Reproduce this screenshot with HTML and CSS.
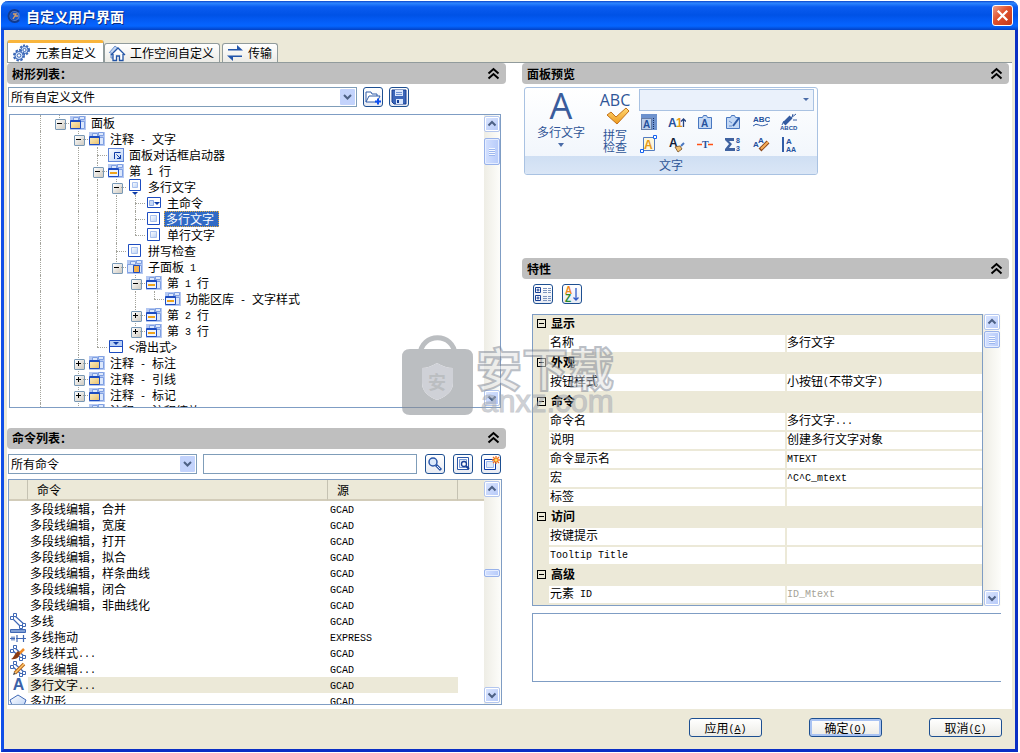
FILE: index.html
```html
<!DOCTYPE html>
<html lang="zh-CN">
<head>
<meta charset="utf-8">
<title>自定义用户界面</title>
<link rel="stylesheet" href="styles.css">
</head>
<body>
<svg class="defs" aria-hidden="true">
  <defs>
    <linearGradient id="tan" x1="0" y1="0" x2="1" y2="1"><stop offset="0" stop-color="#fdf0c4"/><stop offset="1" stop-color="#e8bf6c"/></linearGradient>
    <linearGradient id="pale" x1="0" y1="0" x2="1" y2="1"><stop offset="0" stop-color="#fff"/><stop offset="1" stop-color="#b9d0f4"/></linearGradient>
    <linearGradient id="gold" x1="0" y1="0" x2="0" y2="1"><stop offset="0" stop-color="#ffd873"/><stop offset="1" stop-color="#ee9a1e"/></linearGradient>
  </defs>
  <symbol id="base" viewBox="0 0 18 16">
    <path fill="#b4c8f2" d="M1 1h16v14H1z"/>
    <path fill="#dde8fb" stroke="#7f9fe2" d="M4.500 2.500h5v3h-5zM10.500 1.500h5v3h-5zM11.500 6.500h4v7h-4z"/>
  </symbol>
  <symbol id="panel" viewBox="0 0 18 16"><use href="#base"/><path fill="url(#tan)" stroke="#1d4cc0" d="M1.500 5.500h10v8h-10z"/><path stroke="#1d4cc0" d="M1 6.500h11"/></symbol>
  <symbol id="line" viewBox="0 0 18 16"><use href="#base"/><path fill="#edf3fd" stroke="#1d4cc0" d="M1.500 5.500h10v8h-10z"/><path stroke="#1d4cc0" d="M1 6.500h11"/><path fill="#f0a41c" d="M3 9h7v2H3z"/></symbol>
  <symbol id="sub" viewBox="0 0 18 16"><use href="#base"/><path fill="#dde8fb" stroke="#7f9fe2" d="M1.500 5.500h6v8h-6z"/><path fill="#f4b04a" stroke="#1d4cc0" d="M7.500 6.500h6v7h-6z"/></symbol>
  <symbol id="launch" viewBox="0 0 18 16"><rect x="1.500" y="1.500" width="15" height="13" fill="url(#pale)" stroke="#6287d8"/><path fill="none" stroke="#0d3aa5" d="M7.500 12V5.500h6M9.500 7.500l4 4M13.500 8v3.500H10"/></symbol>
  <symbol id="btn" viewBox="0 0 18 16"><path fill="#fff" stroke="#1d4cc0" d="M2.500 1.500h12v12h-12z"/><path fill="url(#pale)" stroke="#a9c1ee" d="M5.500 4.500h6v6h-6z"/></symbol>
  <symbol id="split" viewBox="0 0 18 16"><path fill="#fff" stroke="#1d4cc0" d="M3.500.500h11v11h-11z"/><path fill="url(#pale)" stroke="#a9c1ee" d="M6.500 3.500h5v5h-5z"/><path fill="#0d3aa5" d="M6 13h6l-3 3z"/></symbol>
  <symbol id="main" viewBox="0 0 18 16"><path fill="#fff" stroke="#1d4cc0" d="M2.500 2.500h13v10h-13z"/><path fill="#c7d9f7" stroke="#8daae6" d="M4.500 5.500h4v5h-4z"/><path fill="#0d3aa5" d="M9 7h6l-3 3z"/></symbol>
  <symbol id="slide" viewBox="0 0 18 16"><path fill="#fff" stroke="#1d4cc0" d="M2.500 1.500h13v12h-13z"/><path fill="#b9cff5" d="M3 2h12v5H3z"/><path stroke="#1d4cc0" d="M3 7.500h12"/><path fill="#0d3aa5" d="M6 3h6L9 6z"/></symbol>
  <symbol id="up" viewBox="0 0 14 14"><path fill="none" stroke="#fff" d="M.5.500h13v13H.5z"/><path fill="none" stroke="#4d6185" stroke-width="2" d="M3.500 8.500L7 5l3.500 3.500"/></symbol>
  <symbol id="down" viewBox="0 0 14 14"><path fill="none" stroke="#fff" d="M.5.500h13v13H.5z"/><path fill="none" stroke="#4d6185" stroke-width="2" d="M3.500 5.500L7 9l3.500-3.500"/></symbol>
  <symbol id="fold" viewBox="0 0 14 14"><path fill="none" stroke="#000" stroke-width="2" d="M1.500 6.500l5-4.500 5 4.500M1.500 11.500l5-4.500 5 4.500"/></symbol>
  <symbol id="mline" viewBox="0 0 18 16"><path fill="none" stroke="#3f68b5" stroke-width="1.200" d="M3 5l9 9M6 3l10 9"/><path fill="#fff" stroke="#3f68b5" d="M1.500 3.500h3v3h-3zM4.500.500h3v3h-3zM13.500 10.500h3v3h-3zM10.500 12.500h3v3h-3z"/></symbol>
  <symbol id="mclip" viewBox="0 0 18 16"><path fill="none" stroke="#3f68b5" stroke-width="1.200" d="M3 5l10 9M6 3l10 9"/><path fill="#fff" stroke="#3f68b5" d="M1.500 4.500h3v3h-3zM4.500.500h3v3h-3zM13.500 10.500h3v3h-3zM10.500 12.500h3v3h-3z"/></symbol>
</svg>

<main class="window">
  <header class="titlebar">
    <svg class="logo" viewBox="0 0 14 14"><circle cx="7" cy="7" r="5" fill="#1c56c4" stroke="#5d7fc4" stroke-width="1.500"/><path fill="none" stroke="#123a8e" stroke-width="2" d="M12 3A6 6 0 1 0 12 11"/><path fill="none" stroke="#d9a066" stroke-width="1.300" d="M6 10l3-5H6M9 5l-1 2h3"/></svg>
    <h1>自定义用户界面</h1>
    <button class="close" aria-label="关闭"><svg viewBox="0 0 20 20"><path stroke="#fff" stroke-width="2.400" d="M5 5l10 10M15 5L5 15"/></svg></button>
  </header>

  <nav class="tabs">
    <button class="tab active"><svg viewBox="0 0 18 18"><g fill="#dce9fb" stroke="#3b68b8"><circle cx="11.500" cy="6" r="4.500" stroke-width="2" stroke-dasharray="2 1.200"/><circle cx="11.500" cy="6" r="3.600"/><circle cx="11.500" cy="6" r="1.600" fill="#fff"/><circle cx="6" cy="11.500" r="5" stroke-width="2" stroke-dasharray="2.400 1.500"/><circle cx="6" cy="11.500" r="4"/><circle cx="6" cy="11.500" r="1.800" fill="#fff"/></g></svg>元素自定义</button>
    <button class="tab"><svg viewBox="0 0 18 18"><path fill="#c4d7f3" stroke="#6c91cd" d="M1 9l6-7 6 5M3 8v6h3"/><path fill="#fff" stroke="#2254a6" stroke-width="1.300" d="M3 11l7-7 7 7M5 10v6.500h3.500V12h3v4.500H15V10"/></svg>工作空间自定义</button>
    <button class="tab gap"><svg viewBox="0 0 18 18"><path fill="#2355aa" d="M2 5h9V1l6 5.500H2zM16 13H7v4l-6-5.500h15z"/></svg>传输</button>
  </nav>

  <div class="page">
    <div class="column left">
      <h2 class="bar"><span>树形列表<span class="colon">：</span></span><svg><use href="#fold"/></svg></h2>
      <div class="tools first">
        <select class="combo wide" aria-label="自定义文件"><option>所有自定义文件</option></select>
        <button class="tool" aria-label="加载"><svg viewBox="0 0 18 16"><path fill="#fff" stroke="#315da8" d="M2 13V3h5l1 2h5v2M2 13l3-6h11l-3 6z"/><path stroke="#0d4ff0" stroke-width="2" d="M11 12.500h6M14 9.500v6"/></svg></button>
        <button class="tool" aria-label="保存"><svg viewBox="0 0 18 16"><path fill="#3c66b8" stroke="#173f94" d="M2 1h14v14H4l-2-2z"/><path fill="#d9e6fb" d="M5 1h8v6H5zM6 10h7v5H6z"/><path stroke="#6f92d2" d="M6 3.500h6M6 5.500h6"/><path fill="#173f94" d="M7 11h2v3H7z"/></svg></button>
      </div>
      <div class="box treebox">
        <div class="tree" role="tree">
          <div class="node"><i class="v"></i><i class="l minus"></i><svg><use href="#panel"/></svg><span>面板</span></div>
          <div class="node"><i class="v"></i><i></i><i class="t minus"></i><svg><use href="#panel"/></svg><span>注释<b> - </b>文字</span></div>
          <div class="node"><i class="v"></i><i></i><i class="v"></i><i class="t"></i><svg><use href="#launch"/></svg><span>面板对话框启动器</span></div>
          <div class="node"><i class="v"></i><i></i><i class="v"></i><i class="t minus"></i><svg><use href="#line"/></svg><span>第<b> 1 </b>行</span></div>
          <div class="node"><i class="v"></i><i></i><i class="v"></i><i class="v"></i><i class="t minus"></i><svg><use href="#split"/></svg><span>多行文字</span></div>
          <div class="node"><i class="v"></i><i></i><i class="v"></i><i class="v"></i><i class="v"></i><i class="t"></i><svg><use href="#main"/></svg><span>主命令</span></div>
          <div class="node"><i class="v"></i><i></i><i class="v"></i><i class="v"></i><i class="v"></i><i class="t"></i><svg><use href="#btn"/></svg><span class="picked">多行文字</span></div>
          <div class="node"><i class="v"></i><i></i><i class="v"></i><i class="v"></i><i class="v"></i><i class="l"></i><svg><use href="#btn"/></svg><span>单行文字</span></div>
          <div class="node"><i class="v"></i><i></i><i class="v"></i><i class="v"></i><i class="t"></i><svg><use href="#btn"/></svg><span>拼写检查</span></div>
          <div class="node"><i class="v"></i><i></i><i class="v"></i><i class="v"></i><i class="l minus"></i><svg><use href="#sub"/></svg><span>子面板<b> 1</b></span></div>
          <div class="node"><i class="v"></i><i></i><i class="v"></i><i class="v"></i><i></i><i class="t minus"></i><svg><use href="#line"/></svg><span>第<b> 1 </b>行</span></div>
          <div class="node"><i class="v"></i><i></i><i class="v"></i><i class="v"></i><i></i><i class="v"></i><i class="l"></i><svg><use href="#line"/></svg><span>功能区库<b> - </b>文字样式</span></div>
          <div class="node"><i class="v"></i><i></i><i class="v"></i><i class="v"></i><i></i><i class="t plus"></i><svg><use href="#line"/></svg><span>第<b> 2 </b>行</span></div>
          <div class="node"><i class="v"></i><i></i><i class="v"></i><i class="v"></i><i></i><i class="l plus"></i><svg><use href="#line"/></svg><span>第<b> 3 </b>行</span></div>
          <div class="node"><i class="v"></i><i></i><i class="v"></i><i class="l"></i><svg><use href="#slide"/></svg><span><b>&lt;</b>滑出式<b>&gt;</b></span></div>
          <div class="node"><i class="v"></i><i></i><i class="t plus"></i><svg><use href="#panel"/></svg><span>注释<b> - </b>标注</span></div>
          <div class="node"><i class="v"></i><i></i><i class="t plus"></i><svg><use href="#panel"/></svg><span>注释<b> - </b>引线</span></div>
          <div class="node"><i class="v"></i><i></i><i class="t plus"></i><svg><use href="#panel"/></svg><span>注释<b> - </b>标记</span></div>
          <div class="node"><i class="v"></i><i></i><i class="t plus"></i><svg><use href="#panel"/></svg><span>注释<b> - </b>注释缩放</span></div>
        </div>
        <div class="scroll"><svg class="arrow"><use href="#up"/></svg><div class="before"></div><div class="thumb grip"></div><div class="after"></div><svg class="arrow"><use href="#down"/></svg></div>
      </div>

      <h2 class="bar"><span>命令列表<span class="colon">：</span></span><svg><use href="#fold"/></svg></h2>
      <div class="tools second">
        <select class="combo half" aria-label="命令类别"><option>所有命令</option></select>
        <input class="search" type="text" aria-label="搜索命令">
        <button class="tool" aria-label="查找"><svg viewBox="0 0 18 16"><circle cx="7" cy="6" r="4" fill="#dceafc" stroke="#2a56a8" stroke-width="1.500"/><path stroke="#2a56a8" stroke-width="3" d="M10 9l5 5"/><path stroke="#e3ecfa" d="M11 10l3 3"/></svg></button>
        <button class="tool" aria-label="查找替换"><svg viewBox="0 0 18 16"><path fill="#fff" stroke="#2a56a8" d="M3.500 1.500h11v12h-11z"/><path fill="#e3ecfa" stroke="#7a9bd6" d="M5.500 3.500h7v8h-7z"/><circle cx="10" cy="8" r="2.500" fill="#fff" stroke="#173f94" stroke-width="1.300"/><path stroke="#173f94" stroke-width="2" d="M12 10l3 3"/></svg></button>
        <button class="tool" aria-label="新建命令"><svg viewBox="0 0 18 16"><path fill="#fff" stroke="#0d3aa5" d="M2.500 3.500h11v10h-11z"/><path fill="#dfe9fa" stroke="#9cb8ec" d="M4.500 5.500h7v6h-7z"/><path stroke="#f2701c" stroke-width="1.300" d="M14 0v8M10 4h8M11 1l6 6M17 1l-6 6"/><circle cx="14" cy="4" r="1.500" fill="#ffe25c"/></svg></button>
      </div>
      <div class="box listbox">
        <table class="commands">
          <colgroup><col class="c-icon"><col class="c-name"><col class="c-source"><col></colgroup>
          <thead><tr><th></th><th>命令</th><th>源</th><th></th></tr></thead>
          <tbody>
            <tr><td></td><td>多段线编辑，合并</td><td><b>GCAD</b></td><td></td></tr>
            <tr><td></td><td>多段线编辑，宽度</td><td><b>GCAD</b></td><td></td></tr>
            <tr><td></td><td>多段线编辑，打开</td><td><b>GCAD</b></td><td></td></tr>
            <tr><td></td><td>多段线编辑，拟合</td><td><b>GCAD</b></td><td></td></tr>
            <tr><td></td><td>多段线编辑，样条曲线</td><td><b>GCAD</b></td><td></td></tr>
            <tr><td></td><td>多段线编辑，闭合</td><td><b>GCAD</b></td><td></td></tr>
            <tr><td></td><td>多段线编辑，非曲线化</td><td><b>GCAD</b></td><td></td></tr>
            <tr><td><svg><use href="#mline"/></svg></td><td>多线</td><td><b>GCAD</b></td><td></td></tr>
            <tr><td><svg viewBox="0 0 18 16"><path fill="#7f9fd6" stroke="#3f68b5" d="M1.500.500h15v3h-15z"/><path fill="none" stroke="#3f68b5" stroke-width="1.200" d="M1 9.500h5M3 7.500v4M5 7.500v4M8 6v7M14.500 6v7M7 9.500h10"/></svg></td><td>多线拖动</td><td><b>EXPRESS</b></td><td></td></tr>
            <tr><td><svg viewBox="0 0 18 16"><use href="#mclip"/><path stroke="#ef8a25" stroke-width="2.500" d="M15 4l-5 5"/><path fill="#8b3b12" d="M11 8c0 4-4 7-9 6 3-1 3-5 7-8z"/></svg></td><td>多线样式<b>...</b></td><td><b>GCAD</b></td><td></td></tr>
            <tr><td><svg viewBox="0 0 18 16"><use href="#mclip"/><path stroke="#b9661b" stroke-width="3.500" d="M15 3L6 12"/><path stroke="#ffc86a" stroke-width="1.500" d="M15 3L6 12"/><path fill="#444" d="M4 14l1-3 2 2z"/></svg></td><td>多线编辑<b>...</b></td><td><b>GCAD</b></td><td></td></tr>
            <tr class="current"><td><span class="glyph">A</span></td><td>多行文字<b>...</b></td><td><b>GCAD</b></td><td></td></tr>
            <tr><td><svg viewBox="0 0 18 16"><path fill="url(#pale)" stroke="#3f68b5" d="M9 2l8 5-3 8H4L1 7z"/></svg></td><td>多边形</td><td><b>GCAD</b></td><td></td></tr>
          </tbody>
        </table>
        <div class="scroll"><svg class="arrow"><use href="#up"/></svg><div class="middle"></div><div class="thumb small"></div><div class="remain"></div><svg class="arrow"><use href="#down"/></svg></div>
      </div>
    </div>

    <div class="column right">
      <h2 class="bar">面板预览<svg><use href="#fold"/></svg></h2>
      <div class="preview">
        <section class="ribbon">
          <div class="groups">
            <button class="big"><span class="letter">A</span>多行文字<svg class="caret" viewBox="0 0 6 4"><path fill="#4a6ca8" d="M0 0h6L3 4z"/></svg></button>
            <button class="big spell"><span class="abc">ABC</span><svg class="tick" viewBox="0 0 24 18"><path fill="url(#gold)" stroke="#c2711b" d="M1 8l4-3 5 5L20 1l3 3L11 17z"/></svg>拼写<br>检查</button>
            <div class="stack">
              <select class="style" aria-label="文字样式"><option></option></select>
              <div class="icons">
                <svg viewBox="0 0 18 18"><path fill="#6d92cd" d="M1 1h16v16H1z"/><path fill="#b9cdea" d="M1 5h11v12H1z"/><path stroke="#172e62" stroke-dasharray="1 1" fill="none" d="M1.500 5.500h10v11h-10zM13.500 5v12"/><text x="3" y="15" class="t10">A</text></svg>
                <svg viewBox="0 0 18 18"><text x="0" y="14" class="t12">A</text><text x="8" y="14" class="t12 amber">1</text><path fill="none" stroke="#24427f" stroke-width="1.300" d="M15.500 14V6M13 8.500L15.500 6 18 8.500"/></svg>
                <svg viewBox="0 0 18 18"><path fill="#c3d8f5" stroke="#4877c0" d="M2.500 4.500h4l1-2h3l1 2h4v11h-13z"/><text x="5" y="14" class="t10">A</text></svg>
                <svg viewBox="0 0 18 18"><path fill="#c3d8f5" stroke="#4877c0" d="M2.500 4.500h4l1-2h3l1 2h4v11h-13z"/><path stroke="#315da8" stroke-width="2" d="M15 5l-6 8"/><path fill="none" stroke="#6b92d0" d="M5 8l3 2M5 13h3"/></svg>
                <svg viewBox="0 0 18 18"><text x="1" y="9" class="t8">ABC</text><path fill="none" stroke="#315da8" d="M1 13q3-3 6-1t9-1"/></svg>
                <svg viewBox="0 0 18 18"><path stroke="#345ba0" stroke-width="4" d="M4 11l7-7"/><path stroke="#345ba0" d="M11 5l5-4M13 7h4M2 12l2-4M12 4l1-3"/><text x="0" y="17" class="t6">ABCD</text></svg>
              </div>
              <div class="icons">
                <svg viewBox="0 0 18 18"><path fill="#fff7d9" stroke="#527bc0" d="M3.500 2.500h11v13h-11z"/><text x="4" y="14" class="t12 amber">A</text><path fill="#fff" stroke="#1463f2" d="M13.500.500h3v3h-3zM.5 14.500h3v3h-3z"/></svg>
                <svg viewBox="0 0 18 18"><text x="1" y="12" class="t12 dark">A</text><path stroke="#4877c0" stroke-width="2" d="M16 8l-3 3"/><path fill="#f2c072" stroke="#8c683b" d="M7 12l5-1 2 3-4 3z"/></svg>
                <svg viewBox="0 0 18 18"><path stroke="#ff5014" stroke-width="1.500" d="M1 9.500h5M12 9.500h5"/><text x="6" y="13" class="serif">T</text></svg>
                <svg viewBox="0 0 18 18"><path fill="#3f62a0" d="M1 3h9v3H5l3 3-3 4h6v3H1v-2l4-5-4-4z"/><text x="12" y="8" class="t7">8</text><text x="12" y="16" class="t7">3</text></svg>
                <svg viewBox="0 0 18 18"><text x="1" y="12" class="t8">A</text><text x="6" y="8" class="t8">A</text><path stroke="#8c481b" stroke-width="4" d="M16 7l-8 8"/><path stroke="#f6ae59" stroke-width="2" d="M16 7l-7 7"/></svg>
                <svg viewBox="0 0 18 18"><path fill="#315da8" d="M2 2h2v15H2z"/><text x="6" y="9" class="t8">A</text><text x="6" y="17" class="t7">AA</text></svg>
              </div>
            </div>
          </div>
          <footer>文字</footer>
        </section>
      </div>

      <h2 class="bar">特性<svg><use href="#fold"/></svg></h2>
      <div class="properties">
        <div class="sorts">
          <button class="tool" aria-label="按分类"><svg viewBox="0 0 18 16"><path fill="#fff" stroke="#173f94" d="M1.500 1.500h5v5h-5zM1.500 9.500h5v5h-5z"/><path stroke="#173f94" d="M2.500 4h3M4 2.500v3M2.500 12h3M4 10.500v3"/><path stroke="#7d94bd" stroke-dasharray="4 1" d="M9 2.500h8M9 4.500h8M9 6.500h8M9 10.500h8M9 12.500h8M9 14.500h8"/></svg></button>
          <button class="tool" aria-label="按字母"><svg viewBox="0 0 18 16"><text x="2" y="8" class="t10 orange">A</text><text x="2" y="16" class="t10 green">Z</text><path fill="none" stroke="#315bc8" stroke-width="1.300" d="M13 2v12M10.500 11.500L13 14l2.500-2.500"/></svg></button>
        </div>
        <div class="sheet">
          <div class="box gridbox">
            <table class="grid">
              <colgroup><col class="g-edge"><col class="g-name"><col></colgroup>
              <tbody>
                <tr class="cat"><th colspan="3"><span class="sign"></span>显示</th></tr>
                <tr><td></td><td>名称</td><td>多行文字</td></tr>
                <tr class="cat"><th colspan="3"><span class="sign"></span>外观</th></tr>
                <tr><td></td><td>按钮样式</td><td>小按钮<b>(</b>不带文字<b>)</b></td></tr>
                <tr class="cat"><th colspan="3"><span class="sign"></span>命令</th></tr>
                <tr><td></td><td>命令名</td><td>多行文字<b>...</b></td></tr>
                <tr><td></td><td>说明</td><td>创建多行文字对象</td></tr>
                <tr><td></td><td>命令显示名</td><td><b>MTEXT</b></td></tr>
                <tr><td></td><td>宏</td><td><b>^C^C_mtext</b></td></tr>
                <tr><td></td><td>标签</td><td></td></tr>
                <tr class="cat"><th colspan="3"><span class="sign"></span>访问</th></tr>
                <tr><td></td><td>按键提示</td><td></td></tr>
                <tr><td></td><td><b>Tooltip Title</b></td><td></td></tr>
                <tr class="cat"><th colspan="3"><span class="sign"></span>高级</th></tr>
                <tr><td></td><td>元素<b> ID</b></td><td class="muted"><b>ID_Mtext</b></td></tr>
              </tbody>
            </table>
          </div>
          <div class="scroll"><svg class="arrow"><use href="#up"/></svg><div class="thumb grip short"></div><div class="after"></div><svg class="arrow"><use href="#down"/></svg></div>
        </div>
        <div class="description"></div>
      </div>
    </div>
  </div>

  <footer class="actions">
    <button class="action">应用<b>(<u>A</u>)</b></button>
    <button class="action default">确定<b>(<u>O</u>)</b></button>
    <button class="action">取消<b>(<u>C</u>)</b></button>
  </footer>

  <div class="watermark" aria-hidden="true">
    <svg viewBox="0 0 71 80"><path fill="none" stroke="#85898f" stroke-width="5" d="M18 20C19-3 52-3 53 20"/><path fill="#85898f" fill-rule="evenodd" d="M8 14h55q8 0 8 8v50q0 8-8 8H8q-8 0-8-8V22q0-8 8-8zM35 28q-8 5-15 5v15q0 11 15 17 16-6 16-17V33q-8 0-16-5z"/><path fill="#a9adb8" d="M35 28q-8 5-15 5v15q0 11 15 17 16-6 16-17V33q-8 0-16-5z"/><text x="26" y="54" class="seal">安</text></svg>
    <div class="brand"><span class="brand-cn">安下载</span><span class="brand-url">anxz.com</span></div>
  </div>
</main>
</body>
</html>
```
FILE: styles.css
```css
* { box-sizing: border-box; }

body {
  margin: 0;
  background: #fff;
  color: #000;
  font: 12px/16px "Noto Sans CJK SC", sans-serif;
}

button, select, input {
  margin: 0;
  padding: 0;
  color: inherit;
  font: inherit;
}

b {
  font: 10px/1px "Liberation Mono", monospace;
  vertical-align: 1px;
  white-space: pre;
}

svg { display: block; flex: none; }
.defs { position: absolute; width: 0; height: 0; }

.window {
  position: relative;
  display: flex;
  flex-direction: column;
  height: calc(100vh - 2px);
  min-height: 640px;
  margin: 1px 2px 0 1px;
  border: solid #0831d9;
  border-color: #0f4fe8 #0a2fc4 #0a2fc4 #0f4fe8;
  border-width: 0 3px 3px;
  border-radius: 7px 7px 0 0;
  background: #ece9d8;
}

/* title bar */
.titlebar {
  display: flex;
  align-items: center;
  flex: none;
  height: 29px;
  margin: 0 -3px;
  padding: 0 5px 0 6px;
  border-radius: 7px 7px 0 0;
  background: linear-gradient(#0b45c8 0, #2e86ff 2px, #0a5cf0 6px, #0052e6 14px, #0560fb 22px, #0565ff 25px, #0341c4 29px);
}
.logo { width: 14px; height: 14px; }
.titlebar h1 {
  flex: 1;
  margin: 0 0 0 5px;
  color: #fff;
  font-size: 14px;
  line-height: 20px;
  text-shadow: 1px 1px #0c2f86;
}
.close {
  width: 21px;
  height: 21px;
  border: 1px solid #fff;
  border-radius: 3px;
  background: linear-gradient(135deg, #f0a088, #e0502c 45%, #c2381a);
}
.close svg { width: 19px; height: 19px; }

/* tabs */
.tabs {
  display: flex;
  align-items: flex-end;
  flex: none;
  height: 32px;
  padding-left: 3px;
}
.tab {
  display: flex;
  align-items: center;
  gap: 4px;
  height: 19px;
  padding: 0 5px 0 3px;
  border: 1px solid #919b9c;
  border-bottom: 0;
  border-radius: 3px 3px 0 0;
  background: linear-gradient(#fff, #ecebe6);
  line-height: 14px;
}
.tab svg { width: 18px; height: 18px; }
.tab.active {
  gap: 5px;
  height: 22px;
  padding: 0 7px 0 5px;
  border-top: 3px solid #f9b53c;
  background: #fff;
}
.tab.gap { margin-left: 2px; }

/* page */
.page {
  display: grid;
  grid-template-columns: 499fr 487fr;
  gap: 16px;
  flex: 1;
  min-height: 0;
  margin: 0 3px;
  padding-right: 3px;
  border-top: 1px solid #919b9c;
  background: #fff;
}
.column {
  display: flex;
  flex-direction: column;
  min-width: 0;
  min-height: 0;
}
.bar {
  display: flex;
  align-items: center;
  justify-content: space-between;
  flex: none;
  height: 21px;
  margin: 0;
  padding: 0 5px;
  border-radius: 4px;
  background: #bfbfbf;
  font-size: 12px;
  line-height: 20px;
}
.bar svg { width: 14px; height: 14px; }
.colon { font-family: "Noto Sans CJK TC", sans-serif; }

.tools {
  display: flex;
  align-items: center;
  gap: 6px;
  flex: none;
  height: 20px;
}
.tools.first { margin: 3px 97px 7px 1px; }
.tools.second { margin: 5px 5px 5px 1px; }

.combo {
  flex: 1;
  min-width: 0;
  height: 20px;
  padding-left: 2px;
  border: 1px solid #7f9db9;
  border-radius: 0;
  appearance: none;
  background: #fff url("data:image/svg+xml,%3Csvg xmlns='http://www.w3.org/2000/svg' width='15' height='16'%3E%3Crect width='15' height='16' rx='1' fill='%23c3d3fc'/%3E%3Cpath d='M4 6l3.500 3.500L11 6' fill='none' stroke='%234d6185' stroke-width='2'/%3E%3C/svg%3E") no-repeat right 1px center;
}
.combo.half { flex: 188 1 0; }
.search {
  flex: 215 1 0;
  min-width: 0;
  height: 20px;
  border: 1px solid #7f9db9;
}
.tool {
  flex: none;
  width: 20px;
  height: 20px;
  border: 1px solid #1d4f91;
  border-radius: 3px;
  background: linear-gradient(#fff, #e8ebf3);
}
.tool svg { width: 18px; height: 16px; }
.second .tool { margin-left: 2px; }

.box {
  display: flex;
  overflow: hidden;
  min-height: 0;
  border: 1px solid #7f9dc4;
  background: #fff;
}
.treebox { flex: 294 1 0; margin: 0 5px 20px 2px; }
.listbox { flex: 226 1 0; margin: 0 4px 4px 1px; }

/* tree */
.tree {
  flex: 1;
  min-width: 0;
  padding-left: 21px;
}
.node {
  display: flex;
  height: 16px;
  white-space: nowrap;
}
.node svg { width: 18px; height: 16px; }
.node span { margin-left: 2px; padding: 0 2px; line-height: 15px; }
.node .picked {
  margin-left: 1px;
  padding-right: 5px;
  outline: 1px dotted #e0a63c;
  outline-offset: -1px;
  background: #316ac5;
  color: #fff;
}
.node i {
  position: relative;
  flex: none;
  width: 19px;
}
.v::before, .t::before, .l::before {
  content: "";
  position: absolute;
  top: 0;
  bottom: 0;
  left: 9px;
  border-left: 1px dotted #a4a49c;
}
.l::before { bottom: 8px; }
.t::after, .l::after {
  content: "";
  position: absolute;
  top: 8px;
  right: 0;
  left: 9px;
  border-top: 1px dotted #a4a49c;
}
.minus::after, .plus::after { left: 14px; }
.minus::before, .plus::before {
  top: 4px;
  bottom: auto;
  left: 5px;
  width: 9px;
  height: 9px;
  border: 1px solid #7898b5;
  border-radius: 1px;
  background:
    linear-gradient(#000, #000) 1px 3px / 5px 1px no-repeat,
    linear-gradient(135deg, #fff, #cfcac0);
}
.plus::before {
  background:
    linear-gradient(#000, #000) 1px 3px / 5px 1px no-repeat,
    linear-gradient(#000, #000) 3px 1px / 1px 5px no-repeat,
    linear-gradient(135deg, #fff, #cfcac0);
}
.t.minus, .t.plus {
  background: repeating-linear-gradient(#a4a49c 0 1px, #fff 1px 2px) 9px 0 / 1px 16px no-repeat;
}
.l.minus, .l.plus {
  background: repeating-linear-gradient(#a4a49c 0 1px, #fff 1px 2px) 9px 0 / 1px 4px no-repeat;
}

/* scroll bars */
.scroll {
  display: flex;
  flex-direction: column;
  flex: none;
  width: 16px;
  padding: 1px 0;
  background: linear-gradient(90deg, #eeede5, #fdfdfa);
}
.arrow {
  width: 16px;
  height: 16px;
  border: 1px solid #b3c6ee;
  border-radius: 2px;
  background: linear-gradient(135deg, #dbe6ff, #b6c9f8);
}
.thumb {
  height: 27px;
  border: 1px solid #98b2ea;
  border-radius: 2px;
  background: linear-gradient(90deg, #d3e0ff, #b7cbfa);
  box-shadow: inset 0 0 0 1px #e6eeff;
}
.grip {
  background:
    repeating-linear-gradient(#f4f8ff 0 1px, #9db7ee 1px 2px) center / 6px 8px no-repeat,
    linear-gradient(90deg, #d3e0ff, #b7cbfa);
}
.short { height: 17px; margin-top: 1px; }
.small { height: 8px; }
.before { height: 6px; }
.after { flex: 1; }
.middle { flex: 72 1 0; }
.remain { flex: 110 1 0; }
.listbox .scroll { padding-right: 1px; width: 17px; }

/* command list */
.commands {
  flex: 1;
  width: 100%;
  min-width: 0;
  align-self: flex-start;
  table-layout: fixed;
  border-spacing: 0;
}
.c-icon { width: 19px; }
.c-name { width: 300px; }
.c-source { width: 130px; }
.commands th {
  height: 21px;
  padding: 0 9px;
  border-right: 1px solid #c5c2b2;
  border-bottom: 2px solid #d2ccb9;
  background: #ece9d8;
  font-weight: 400;
  line-height: 19px;
  text-align: left;
}
.commands th:first-child, .commands th:last-child { padding: 0; }
.commands th:last-child { border-right: 0; }
.commands td {
  height: 16px;
  padding: 0 2px;
  line-height: 15px;
  vertical-align: top;
  white-space: nowrap;
}
.commands td:first-child, .commands td:last-child { padding: 0; }
.commands svg { width: 18px; height: 16px; }
.current td:nth-child(2), .current td:nth-child(3) { background: #ece9d8; }
.glyph {
  display: block;
  color: #3c62a8;
  font: 700 16px/16px "Liberation Sans", sans-serif;
  text-align: center;
}

/* ribbon preview */
.preview {
  flex: none;
  height: 174px;
  padding: 3px 2px;
}
.ribbon {
  width: 294px;
  overflow: hidden;
  border: 1px solid #a9c2e2;
  border-radius: 3px;
  background: linear-gradient(#fff, #eef4fb);
  color: #2f5597;
}
.groups { display: flex; height: 68px; }
.big {
  display: flex;
  flex-direction: column;
  align-items: center;
  width: 72px;
  border: 0;
  background: none;
  line-height: 12px;
}
.letter {
  margin-bottom: 2px;
  color: #3a5c9c;
  font: 36px/36px "Open Sans", sans-serif;
}
.caret { width: 6px; height: 4px; margin-top: 5px; }
.spell { display: block; width: 36px; text-align: center; }
.abc {
  display: block;
  font: 16px/16px "Open Sans", sans-serif;
}
.tick { width: 24px; height: 18px; margin: -1px 0 4px 9px; }
.stack { flex: 1; padding: 1px 3px 0 6px; }
.style {
  display: block;
  width: 100%;
  height: 22px;
  border: 1px solid #a9c2e2;
  appearance: none;
  background: #eaf1fb url("data:image/svg+xml,%3Csvg xmlns='http://www.w3.org/2000/svg' width='6' height='4'%3E%3Cpath d='M0 0h6L3 3z' fill='%234a6ca8'/%3E%3C/svg%3E") no-repeat right 4px center;
}
.icons {
  display: flex;
  gap: 10px;
  padding: 2px 0 2px 1px;
}
.icons svg { width: 18px; height: 18px; }
.ribbon footer {
  height: 18px;
  background: linear-gradient(#cfdff3, #dae6f6);
  line-height: 17px;
  text-align: center;
}
text { font-family: "Liberation Sans", sans-serif; font-weight: 700; fill: #24509c; }
.t6 { font-size: 6px; }
.t7 { font-size: 7px; }
.t8 { font-size: 8px; }
.t10 { font-size: 10px; }
.t12 { font-size: 12px; }
.amber { fill: #e59a17; }
.orange { fill: #f08a1d; }
.green { fill: #2c8a2c; }
.dark { fill: #111c38; }
.serif { font: 700 10px "Liberation Serif", serif; }

/* properties */
.properties {
  display: flex;
  flex-direction: column;
  flex: 1;
  min-height: 0;
  padding: 5px 8px 27px 10px;
}
.sorts { display: flex; gap: 9px; margin: 0 0 10px 1px; }
.sheet { display: flex; flex: 1; min-height: 0; }
.gridbox { flex: 1; min-width: 0; background: #ece9d8; }
.sheet .scroll { width: 18px; padding: 0 1px; }
.grid {
  width: 100%;
  align-self: flex-start;
  table-layout: fixed;
  border-spacing: 0;
}
.g-edge { width: 16px; }
.g-name { width: 236px; }
.grid td {
  height: 19px;
  padding: 0 0 0 1px;
  border-bottom: 2px solid #ece9d8;
  background: #fff;
  line-height: 14px;
  vertical-align: top;
  white-space: nowrap;
}
.grid td:first-child { background: #ece9d8; }
.grid td:last-child { padding: 0; border-left: 2px solid #ece9d8; }
.grid th {
  height: 20px;
  padding: 0 0 0 4px;
  line-height: 16px;
  text-align: left;
  vertical-align: top;
}
.sign {
  display: inline-block;
  width: 9px;
  height: 9px;
  margin-right: 5px;
  border: 1px solid #000;
  background: linear-gradient(#000, #000) center / 5px 1px no-repeat;
}
.grid .muted { color: #a5a397; }
.description {
  flex: none;
  height: 69px;
  margin-top: 7px;
  border: 1px solid #7f9dc4;
  border-right: 0;
}

/* dialog buttons */
.actions {
  display: flex;
  justify-content: flex-end;
  align-items: flex-start;
  gap: 47px;
  flex: none;
  height: 40px;
  padding: 9px 13px 0;
}
.action {
  width: 73px;
  height: 19px;
  border: 1px solid #1d4f91;
  border-radius: 3px;
  background: linear-gradient(#fff, #ecebe5);
  line-height: 16px;
}
.default { box-shadow: inset 0 0 0 2px #a9c3f2; }

/* watermark */
.watermark {
  position: absolute;
  top: 334px;
  left: 398px;
  display: flex;
  gap: 3px;
  opacity: 0.55;
  pointer-events: none;
}
.watermark svg { width: 71px; height: 80px; }
.seal { font: 700 18px "Noto Sans CJK SC", sans-serif; fill: #85898f; }
.brand { display: flex; flex-direction: column; padding-top: 11px; }
.brand-cn {
  color: #e4e5e4;
  font-size: 46px;
  font-weight: 700;
  line-height: 40px;
  -webkit-text-stroke: 2px #858c99;
}
.brand-url {
  padding-left: 5px;
  color: #a9adb5;
  font: 31px/32px "Liberation Sans", sans-serif;
  -webkit-text-stroke: 1px #a0a5ae;
}
```
